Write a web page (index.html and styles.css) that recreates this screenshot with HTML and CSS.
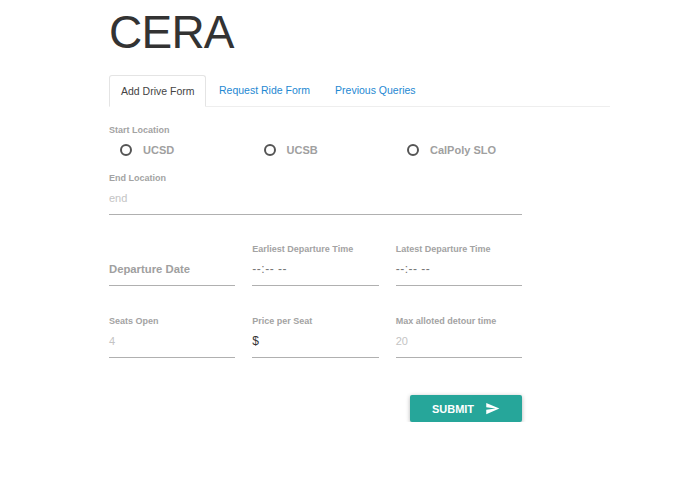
FILE: index.html
```html
<!DOCTYPE html>
<html lang="en">
<head>
    <meta charset="UTF-8">
    <title>CERA</title>
    <link rel="stylesheet" href="styles.css">
</head>
<body>

    <div class="container">
        <h1>CERA</h1>

        <div class="tabs">
            <a class="tab active">Add Drive Form</a>
            <a class="tab">Request Ride Form</a>
            <a class="tab">Previous Queries</a>
        </div>

        <form class="drive-form">
            <label class="field-label start-label">Start Location</label>
            <div class="radio-row">
                <div class="radio"><span class="radio-circle"></span>UCSD</div>
                <div class="radio"><span class="radio-circle"></span>UCSB</div>
                <div class="radio"><span class="radio-circle"></span>CalPoly SLO</div>
            </div>

            <div class="field end-field">
                <label class="field-label">End Location</label>
                <div class="value placeholder">end</div>
            </div>

            <div class="row first-row">
                <div class="field">
                    <label class="field-label">&nbsp;</label>
                    <div class="value date-label">Departure Date</div>
                </div>
                <div class="field">
                    <label class="field-label">Earliest Departure Time</label>
                    <div class="value time">--:-- --</div>
                </div>
                <div class="field">
                    <label class="field-label">Latest Departure Time</label>
                    <div class="value time">--:-- --</div>
                </div>
            </div>

            <div class="row second-row">
                <div class="field">
                    <label class="field-label">Seats Open</label>
                    <div class="value placeholder">4</div>
                </div>
                <div class="field">
                    <label class="field-label">Price per Seat</label>
                    <div class="value price">$</div>
                </div>
                <div class="field">
                    <label class="field-label">Max alloted detour time</label>
                    <div class="value placeholder">20</div>
                </div>
            </div>

            <div class="actions">
                <button type="button" class="submit">SUBMIT
                    <svg class="send-icon" viewBox="0 0 24 24" width="15" height="15"><path d="M2 21l21-9L2 3v7l15 2-15 2z"/></svg>
                </button>
            </div>
        </form>
    </div>

</body>
</html>
```

FILE: styles.css
```css
body {
    font-family: "Liberation Sans", Arial, sans-serif;
    background-color: #fff;
    margin: 0;
    padding: 0;
}
.container {
    width: 501px;
    margin-left: 109px;
}
h1 {
    margin: 0;
    padding-top: 6px;
    height: 75px;
    box-sizing: border-box;
    font-size: 46px;
    line-height: 52px;
    font-weight: 400;
    letter-spacing: -0.75px;
    color: #333;
}
.tabs {
    display: flex;
    height: 32px;
    box-sizing: border-box;
    border-bottom: 1px solid #eee;
}
.tab {
    height: 31px;
    padding: 0 11.5px 0 13.5px;
    font-size: 10.5px;
    line-height: 31px;
    color: #1e88d2;
}
.tab.active {
    height: 32px;
    box-sizing: border-box;
    padding: 0 10px 0 11px;
    color: #444;
    background-color: #fff;
    border: 1px solid #e4e4e4;
    border-bottom-color: #fff;
    border-radius: 3px 3px 0 0;
}
.drive-form {
    width: 413px;
}
.field-label {
    display: block;
    height: 12px;
    font-size: 9px;
    line-height: 12px;
    font-weight: 700;
    color: #a3a3a3;
}
.start-label {
    margin-top: 17px;
}
.radio-row {
    display: grid;
    grid-template-columns: repeat(3, 143.5px);
    margin-top: 4px;
}
.radio {
    display: flex;
    align-items: center;
    height: 20px;
    padding-left: 11px;
    font-size: 11px;
    font-weight: 700;
    color: #a0a0a0;
}
.radio-circle {
    width: 8px;
    height: 8px;
    margin-right: 11px;
    border: 2px solid #555;
    border-radius: 50%;
}
.end-field {
    margin-top: 12px;
}
.value {
    height: 28px;
    margin-top: 2px;
    font-size: 11px;
    line-height: 24px;
    border-bottom: 1px solid #b0b0b0;
}
.placeholder {
    color: #c4c4c4;
}
.date-label {
    font-size: 11.3px;
    font-weight: 700;
    color: #a0a0a0;
}
.time {
    font-size: 12px;
    letter-spacing: 0.5px;
    color: #777;
}
.price {
    font-size: 12px;
    color: #333;
}
.row {
    display: grid;
    grid-template-columns: repeat(3, 1fr);
    column-gap: 17px;
}
.first-row {
    margin-top: 28px;
}
.second-row {
    margin-top: 29px;
}
.actions {
    display: flex;
    justify-content: flex-end;
    margin-top: 37px;
}
.submit {
    display: flex;
    align-items: center;
    justify-content: center;
    gap: 11px;
    width: 112px;
    height: 27px;
    padding: 0;
    border: none;
    border-radius: 2px;
    font-family: inherit;
    font-size: 11px;
    font-weight: 700;
    color: #fff;
    background-color: #26a69a;
    box-shadow: 0 1px 4px rgba(0, 0, 0, 0.3);
}
.send-icon {
    fill: #fff;
}
```
